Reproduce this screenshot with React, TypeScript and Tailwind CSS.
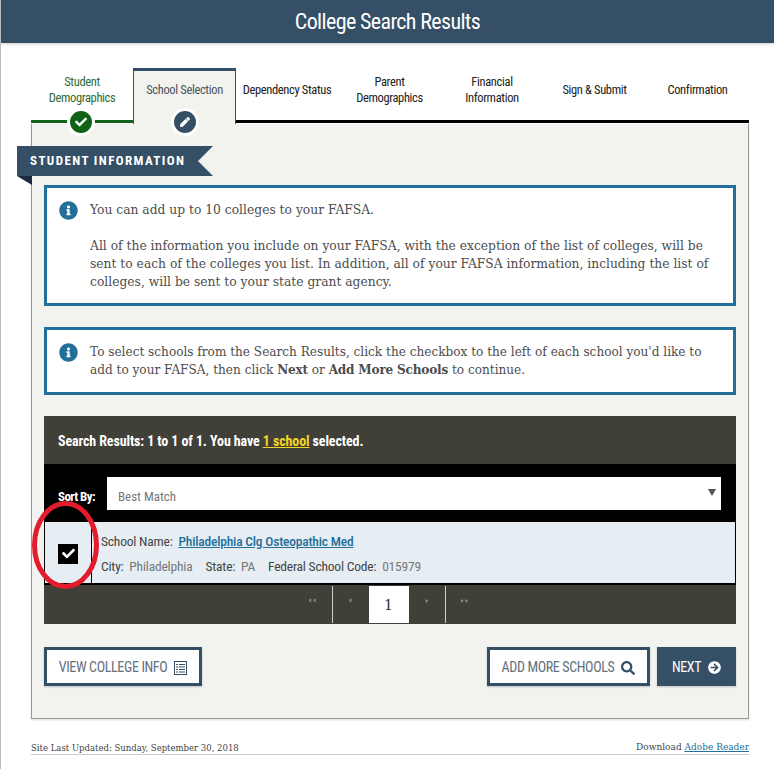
import { FaArrowCircleRight, FaCheck, FaInfoCircle, FaPen, FaSearch } from "react-icons/fa";

const narrow = "font-['Liberation_Sans_Narrow','Roboto_Condensed',Roboto,sans-serif]";
const serif = "font-['DejaVu_Serif',serif]";

function StepTab({ label, width }: { label: string[]; width: string }) {
  return (
    <div className={`${width} flex h-[55px] flex-col items-center justify-center border-b-[3px] border-black pb-[8px] text-[12.500px] leading-[16px] tracking-[-0.35px] text-[#222]`}>
      {label.map((l) => (
        <span key={l}>{l}</span>
      ))}
    </div>
  );
}

function InfoBox({ children, height }: { children: React.ReactNode; height: string }) {
  return (
    <div className={`flex gap-[12px] border-[3px] border-[#22709a] bg-white pl-[12px] pr-[20px] pt-[13px] leading-[18px] text-[#4d4d4d] ${height} ${serif}`}>
      <FaInfoCircle className="h-[19px] w-[19px] shrink-0 text-[#22709a]" />
      <div>{children}</div>
    </div>
  );
}

function ListIcon() {
  return (
    <svg width="13" height="14" viewBox="0 0 13 14" className="text-[#354f67]">
      <rect x="0.5" y="0.5" width="12" height="13" fill="none" stroke="currentColor" />
      <path d="M2 3h2v1H2zM5 3h6v1H5zM2 5.5h2v1H2zM5 5.5h6v1H5zM2 8h2v1H2zM5 8h6v1H5zM2 10.500h2v1H2zM5 10.500h6v1H5z" fill="currentColor" />
    </svg>
  );
}

export default function App() {
  return (
    <div className={`relative h-[769px] w-[774px] overflow-hidden border-l border-[#bdbdbd] bg-white ${narrow}`}>
      <header className="flex h-[43px] items-center justify-center bg-[#354f67] text-[22px] tracking-[-0.62px] text-white shadow-[0_1px_3px_rgba(0,0,0,0.2)]">
        College Search Results
      </header>

      <div className="ml-[30px] mt-[25px] w-[718px]">
        <div className="flex">
          <div className="relative flex h-[55px] w-[102px] flex-col items-center border-b-[3px] border-[#0e6317] pt-[6px] text-[12.500px] leading-[16px] tracking-[-0.35px] text-[#2f6b33]">
            <span>Student</span>
            <span>Demographics</span>
            <span className="absolute left-[36px] top-[40px] flex h-[28px] w-[28px] items-center justify-center rounded-full border-[3px] border-white bg-[#0e6317] text-white">
              <FaCheck className="h-[12px] w-[12px]" />
            </span>
          </div>
          <div className="relative flex h-[56px] w-[103px] justify-center border-x border-t-[3px] border-[#354f67] bg-[#f2f2ef] pt-[11px] text-[12.500px] leading-[16px] tracking-[-0.35px] text-[#4a5560]">
            School Selection
            <span className="absolute left-[37px] top-[37px] flex h-[28px] w-[28px] items-center justify-center rounded-full border-[3px] border-white bg-[#354f67] text-white">
              <FaPen className="h-[10px] w-[10px]" />
            </span>
          </div>
          <StepTab label={["Dependency Status"]} width="w-[102px]" />
          <StepTab label={["Parent", "Demographics"]} width="w-[103px]" />
          <StepTab label={["Financial", "Information"]} width="w-[102px]" />
          <StepTab label={["Sign & Submit"]} width="w-[103px]" />
          <StepTab label={["Confirmation"]} width="w-[103px]" />
        </div>

        <main className="h-[595px] border-x border-b border-[#999] bg-[#f2f2ef] px-[12px] pt-[22px] shadow-[0_1px_2px_rgba(0,0,0,0.15)]">
          <div className="relative -ml-[27px] w-fit">
            <div className="flex h-[30px] w-[196px] items-center bg-[#354f67] pl-[13px] text-[13px] font-bold tracking-[1.4px] text-white [clip-path:polygon(0_0,100%_0,calc(100%-15px)_50%,100%_100%,0_100%)]">
              STUDENT INFORMATION
            </div>
            <div className="h-0 w-0 border-l-[15px] border-t-[9px] border-l-transparent border-t-[#1b2c3e]" />
          </div>

          <InfoBox height="h-[121px] text-[12.300px]">
            <p>You can add up to 10 colleges to your FAFSA.</p>
            <p className="mt-[18px]">
              All of the information you include on your FAFSA, with the exception of the list of colleges, will be sent to each of the colleges you list. In addition, all of your FAFSA information, including the list of colleges, will be sent to your state grant agency.
            </p>
          </InfoBox>

          <div className="mt-[21px]">
            <InfoBox height="h-[68px] text-[12.100px]">
              <p>
                To select schools from the Search Results, click the checkbox to the left of each school you'd like to add to your FAFSA, then click <b className="tracking-[-0.2px]">Next</b> or <b className="tracking-[-0.2px]">Add More Schools</b> to continue.
              </p>
            </InfoBox>
          </div>

          <section className="mt-[21px]">
            <div className="flex h-[48px] items-center bg-[#403f38] pl-[14px] pt-[2px] text-[14px] font-bold tracking-[-0.1px] text-white">
              <span>
                Search Results: 1 to 1 of 1. You have <a className="text-[#f5d327] underline">1 school</a> selected.
              </span>
            </div>
            <div className="flex h-[57px] items-center bg-black pl-[14px] pr-[15px] pt-[1px]">
              <span className="mt-[7px] w-[49px] text-[13px] font-bold tracking-[-0.6px] text-white">Sort By:</span>
              <div className="flex h-[33px] flex-1 items-center justify-between bg-white pl-[11px] pr-[5px] text-[13px] text-[#777]">
                <span className="mt-[7px]">Best Match</span>
                <svg width="8" height="7" viewBox="0 0 8 7" className="mb-[2px]">
                  <path d="M0 0h8L4 7z" fill="#555" />
                </svg>
              </div>
            </div>
            <div className="flex h-[64px] border border-b-[2px] border-black bg-[#e6eef4] text-[13.500px] tracking-[-0.2px]">
              <div className="flex w-[47px] shrink-0 items-center justify-center border-r border-black pt-[2px]">
                <span className="flex h-[20px] w-[20px] items-center justify-center bg-black text-white">
                  <FaCheck className="h-[13px] w-[13px]" />
                </span>
              </div>
              <div className="flex flex-col justify-center gap-[4px] pl-[9px] pt-[2px] text-[#444]">
                <div>
                  School Name:&nbsp;&nbsp;<a className="font-medium text-[#22709a] underline">Philadelphia Clg Osteopathic Med</a>
                </div>
                <div className="flex gap-[13px]">
                  <span>
                    City:&nbsp;&nbsp;<span className="text-[#777]">Philadelphia</span>
                  </span>
                  <span>
                    State:&nbsp;&nbsp;<span className="text-[#777]">PA</span>
                  </span>
                  <span>
                    Federal School Code:&nbsp;&nbsp;<span className="text-[#777]">015979</span>
                  </span>
                </div>
              </div>
            </div>
            <nav className="flex h-[39px] justify-center bg-[#403f38] py-[1px] pr-[4px] text-[7px] text-[#bbb]">
              <span className="flex w-[38px] justify-center pt-[10px]">« «</span>
              <span className="flex w-[37px] justify-center border-l border-[#ccc] pt-[10px]">«</span>
              <span className={`flex w-[40px] items-center justify-center bg-white pt-[2px] text-[14px] text-[#333] ${serif}`}>1</span>
              <span className="flex w-[36px] justify-center pt-[10px]">»</span>
              <span className="flex w-[38px] justify-center border-l border-[#ccc] pt-[10px]">» »</span>
            </nav>
          </section>

          <div className="mt-[23px] flex items-center text-[14px] tracking-[-0.35px]">
            <button className="flex h-[39px] w-[158px] items-center justify-center gap-[7px] border-[3px] border-[#354f67] bg-white pt-[2px] text-[#63717e] shadow-[0_1px_2px_rgba(0,0,0,0.2)]">
              VIEW COLLEGE INFO
              <ListIcon />
            </button>
            <button className="ml-auto flex h-[39px] w-[163px] items-center justify-center gap-[7px] border-[3px] border-[#354f67] bg-white pt-[2px] text-[#63717e] shadow-[0_1px_2px_rgba(0,0,0,0.2)]">
              ADD MORE SCHOOLS
              <FaSearch className="h-[14px] w-[14px] text-[#354f67]" />
            </button>
            <button className="ml-[7px] flex h-[39px] w-[79px] items-center justify-center gap-[7px] bg-[#354f67] pt-[2px] text-white shadow-[0_1px_2px_rgba(0,0,0,0.2)]">
              NEXT
              <FaArrowCircleRight className="h-[13px] w-[13px]" />
            </button>
          </div>
        </main>

        <footer className={`mt-[23px] flex h-[12px] items-center justify-between text-[#444] ${serif}`}>
          <span className="text-[8.500px]">Site Last Updated: Sunday, September 30, 2018</span>
          <span className="text-[9px]">
            Download <a className="text-[#22709a] underline">Adobe Reader</a>
          </span>
        </footer>
        <div className="h-px bg-[#ccc]" />
      </div>

      {/* hand-drawn annotation on the screenshot */}
      <svg className="absolute left-[30px] top-[499px]" width="70" height="92" viewBox="0 0 70 92">
        <ellipse cx="34.500" cy="46" rx="31" ry="41.500" fill="none" stroke="#e31b2d" strokeWidth="5" />
      </svg>
    </div>
  );
}
